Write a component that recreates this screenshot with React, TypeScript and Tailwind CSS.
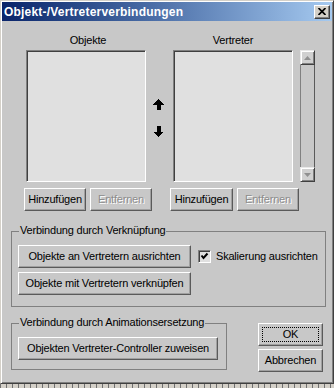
import type { ReactNode } from "react";

const raised =
  "border border-t-white border-l-white border-r-[#5a5a5a] border-b-[#5a5a5a] shadow-[inset_-1px_-1px_0_#a0a0a0] bg-[#c8c8c8]";

const sunken =
  "border border-t-[#808080] border-l-[#808080] border-r-white border-b-white shadow-[inset_1px_1px_0_#404040]";

function Btn({
  children,
  width,
  disabled,
  focus,
}: {
  children: ReactNode;
  width: string;
  disabled?: boolean;
  focus?: boolean;
}) {
  return (
    <button
      className={`relative flex items-center justify-center h-[23px] ${width} ${raised} ${
        disabled ? "text-[#8c8c8c] [text-shadow:1px_1px_0_#fff]" : "text-black"
      }`}
    >
      {focus && (
        <span className="absolute inset-[3px] border border-dotted border-black" />
      )}
      {children}
    </button>
  );
}

function ListBox() {
  return <div className={`w-[120px] h-[132px] bg-[#e0e0e0] ${sunken}`} />;
}

function ArrowUp() {
  return (
    <svg width="11" height="11" viewBox="0 0 11 11" shapeRendering="crispEdges">
      <path d="M5.5 0 L11 5.5 L7.5 5.5 L7.5 11 L3.5 11 L3.5 5.5 L0 5.5 Z" fill="#000" />
    </svg>
  );
}

function ArrowDown() {
  return (
    <svg width="11" height="11" viewBox="0 0 11 11" shapeRendering="crispEdges">
      <path d="M5.5 11 L11 5.5 L7.5 5.5 L7.5 0 L3.5 0 L3.5 5.5 L0 5.5 Z" fill="#000" />
    </svg>
  );
}

function ScrollButton({ up }: { up?: boolean }) {
  return (
    <div
      className="w-[15px] h-[15px] flex items-center justify-center bg-[#d0d0d0] border border-t-[#e8e8e8] border-l-[#e8e8e8] border-r-[#404040] border-b-[#404040] shadow-[inset_1px_1px_0_#fff,inset_-1px_-1px_0_#808080]"
    >
      <svg width="7" height="4" viewBox="0 0 7 4">
        <path d={up ? "M3.5 0 L7 4 L0 4 Z" : "M0 0 L7 0 L3.5 4 Z"} fill="#909090" />
      </svg>
    </div>
  );
}

function Group({
  label,
  className,
  children,
}: {
  label: string;
  className: string;
  children: ReactNode;
}) {
  return (
    <div className={`relative border border-[#808080] ${className}`}>
      <span className="absolute left-[7px] top-[-8px] px-[1px] bg-[#c8c8c8]">{label}</span>
      {children}
    </div>
  );
}

export default function App() {
  return (
    <div className="w-[334px] h-[388px] overflow-hidden bg-[#c8c8c8] [font-family:'Liberation_Sans',Arial,sans-serif] text-[11px] leading-[13px] tracking-[-0.2px] text-black">
      <div className="h-[384px] flex flex-col p-[1px] border border-t-[#d4d0c8] border-l-[#d4d0c8] border-r-[#404040] border-b-[#404040] shadow-[inset_1px_1px_0_#fff,inset_-1px_-1px_0_#808080]">
        {/* title bar */}
        <div className="h-[19px] shrink-0 flex items-center justify-between pl-[2px] pr-[2px] bg-gradient-to-r from-[#0a246a] to-[#a6caf0]">
          <span className="text-white font-bold text-[12px] leading-[14px] tracking-[0.2px] pt-[1px]">
            Objekt-/Vertreterverbindungen
          </span>
          <div className="w-[16px] h-[14px] flex items-center justify-center bg-[#d4d0c8] border border-t-white border-l-white border-r-[#404040] border-b-[#404040] shadow-[inset_-1px_-1px_0_#808080]">
            <svg width="8" height="7" viewBox="0 0 8 7">
              <path d="M0.5 0 L7.5 7 M7.5 0 L0.5 7" stroke="#000" strokeWidth="1.7" />
            </svg>
          </div>
        </div>

        {/* lists */}
        <div className="flex pt-[13px] pl-[22px]">
          <div className="w-[128px] flex flex-col">
            <div className="h-[13px] text-center">Objekte</div>
            <div className="mt-[3px] ml-[2px]">
              <ListBox />
            </div>
            <div className="mt-[6px] flex gap-[4px]">
              <Btn width="w-[62px]">Hinzufügen</Btn>
              <Btn width="w-[62px]" disabled>
                Entfernen
              </Btn>
            </div>
          </div>

          <div className="w-[18px] pl-[1px] pt-[65px] flex flex-col gap-[16px]">
            <ArrowUp />
            <ArrowDown />
          </div>

          <div className="w-[129px] flex flex-col">
            <div className="h-[13px] text-center pr-[3px]">Vertreter</div>
            <div className="mt-[3px] ml-[3px]">
              <ListBox />
            </div>
            <div className="mt-[6px] flex gap-[4px]">
              <Btn width="w-[63px]">Hinzufügen</Btn>
              <Btn width="w-[62px]" disabled>
                Entfernen
              </Btn>
            </div>
          </div>

          <div className="ml-[1px] mt-[16px] w-[15px] h-[132px] flex flex-col">
            <ScrollButton up />
            <div className="flex-1 border-x border-l-[#808080] border-r-[#5a5a5a] bg-[#c8c8c8]" />
            <ScrollButton />
          </div>
        </div>

        {/* link group */}
        <Group label="Verbindung durch Verknüpfung" className="mt-[20px] ml-[9px] mr-[6px] h-[76px] pl-[6px] pt-[13px]">
          <div className="flex items-center">
            <Btn width="w-[173px]">Objekte an Vertretern ausrichten</Btn>
            <div className={`ml-[7px] w-[13px] h-[13px] flex items-center justify-center bg-[#e0e0e0] ${sunken}`}>
              <svg width="9" height="9" viewBox="0 0 9 9">
                <path d="M1.5 3.5 L3.5 6 L7.5 1.5" stroke="#000" strokeWidth="2" fill="none" />
              </svg>
            </div>
            <span className="ml-[5px]">Skalierung ausrichten</span>
          </div>
          <div className="mt-[4px]">
            <Btn width="w-[173px]">Objekte mit Vertretern verknüpfen</Btn>
          </div>
        </Group>

        {/* bottom row */}
        <div className="flex items-start mt-[16px] ml-[9px]">
          <Group label="Verbindung durch Animationsersetzung" className="w-[216px] h-[47px] pl-[6px] pt-[13px]">
            <Btn width="w-[200px]">Objekten Vertreter-Controller zuweisen</Btn>
          </Group>
          <div className="ml-[31px] flex flex-col gap-[3px]">
            <Btn width="w-[65px]" focus>
              OK
            </Btn>
            <Btn width="w-[65px]">Abbrechen</Btn>
          </div>
        </div>
      </div>
      <div className="h-[4px] bg-[repeating-linear-gradient(90deg,#707070_0_1px,#d4d0c8_1px_6px)]" />
    </div>
  );
}
